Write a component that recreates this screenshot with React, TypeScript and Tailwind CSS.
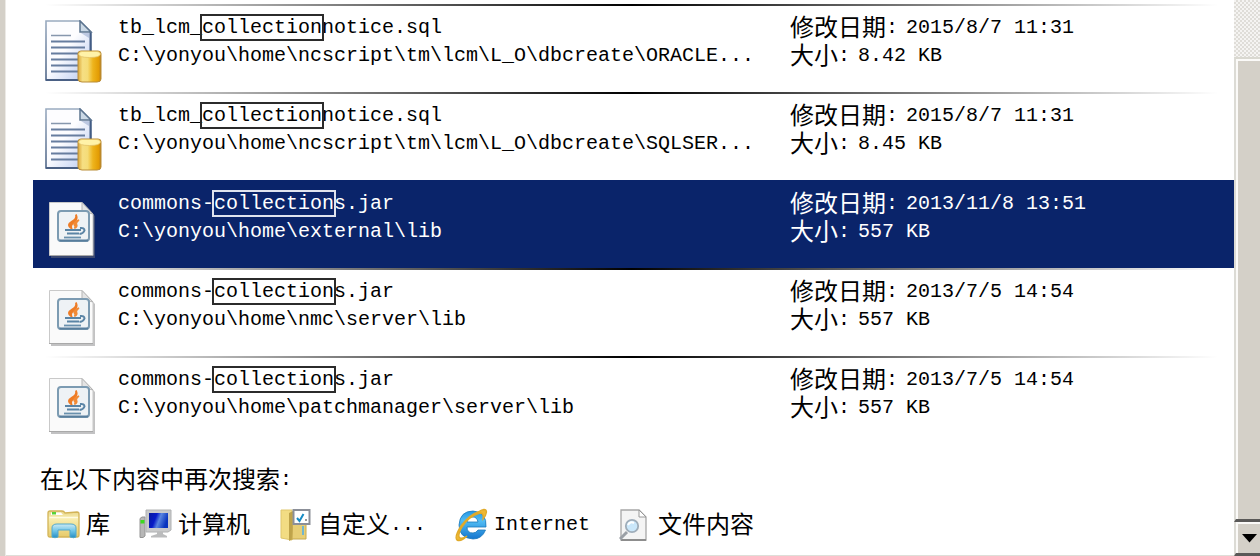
import type { ReactNode } from "react";

type FileKind = "sql" | "jar";

interface Result {
  kind: FileKind;
  before: string;
  match: string;
  after: string;
  path: string;
  date: string;
  size: string;
  selected?: boolean;
}

const results: Result[] = [
  { kind: "sql", before: "tb_lcm_", match: "collection", after: "notice.sql", path: "C:\\yonyou\\home\\ncscript\\tm\\lcm\\L_O\\dbcreate\\ORACLE...", date: "2015/8/7 11:31", size: "8.42 KB" },
  { kind: "sql", before: "tb_lcm_", match: "collection", after: "notice.sql", path: "C:\\yonyou\\home\\ncscript\\tm\\lcm\\L_O\\dbcreate\\SQLSER...", date: "2015/8/7 11:31", size: "8.45 KB" },
  { kind: "jar", before: "commons-", match: "collection", after: "s.jar", path: "C:\\yonyou\\home\\external\\lib", date: "2013/11/8 13:51", size: "557 KB", selected: true },
  { kind: "jar", before: "commons-", match: "collection", after: "s.jar", path: "C:\\yonyou\\home\\nmc\\server\\lib", date: "2013/7/5 14:54", size: "557 KB" },
  { kind: "jar", before: "commons-", match: "collection", after: "s.jar", path: "C:\\yonyou\\home\\patchmanager\\server\\lib", date: "2013/7/5 14:54", size: "557 KB" },
];

function SqlIcon() {
  return (
    <svg width="58" height="64" viewBox="0 0 58 64" aria-hidden="true">
      <defs>
        <linearGradient id="sheet" x1="0" y1="0" x2="1" y2="1">
          <stop offset="0.45" stopColor="#fdfdff" />
          <stop offset="1" stopColor="#b4c6ee" />
        </linearGradient>
        <linearGradient id="edge" x1="0" y1="0" x2="0" y2="1">
          <stop offset="0" stopColor="#9aabc0" />
          <stop offset="1" stopColor="#4d6486" />
        </linearGradient>
        <linearGradient id="gold" x1="0" y1="0" x2="1" y2="0">
          <stop offset="0" stopColor="#dca83a" />
          <stop offset="0.2" stopColor="#f6df83" />
          <stop offset="0.42" stopColor="#f5dc78" />
          <stop offset="0.65" stopColor="#eeb41c" />
          <stop offset="0.9" stopColor="#e39c04" />
          <stop offset="1" stopColor="#b97e1c" />
        </linearGradient>
      </defs>
      <path d="M1 1H35L46 12V60H1Z" fill="url(#sheet)" stroke="url(#edge)" strokeWidth="1.6" />
      <path d="M45.5 12V60" stroke="#425c85" strokeWidth="2" />
      <path d="M1 60H46" stroke="#4a6084" strokeWidth="2" />
      <path d="M35 1V12H46Z" fill="#cbd9e6" stroke="#5d7590" strokeWidth="1.5" />
      <path d="M36 13H44V18Z" fill="#8ba0c8" opacity="0.5" />
      <path d="M6 15.500H26" stroke="#8797ad" strokeWidth="1.5" />
      <path d="M6 21.500H40M6 27.500H40M6 33.500H36M6 39.500H33M6 45.500H33M6 51.500H33" stroke="#677d9f" strokeWidth="1.8" />
      <path d="M33 33.500Q33 31 36 31H53Q56 31 56 33.500V59Q56 62 52 62H37Q33 62 33 59Z" fill="url(#gold)" stroke="#b98d38" strokeWidth="1" />
      <path d="M33.500 34Q34 31.500 37 31.500H52Q55 31.500 55.500 34Q55 37.500 44.500 37.500T33.500 34Z" fill="#fff2a8" stroke="#e2c268" strokeWidth="0.8" />
    </svg>
  );
}

function JarIcon() {
  return (
    <svg width="58" height="60" viewBox="0 0 58 60" aria-hidden="true">
      <path d="M6 4H38L50 16V58H6Z" fill="#77777a" opacity="0.45" />
      <path d="M4.500 2.500H37L48 14V55.500H4.500Z" fill="#fafafa" stroke="#c9c9c9" strokeWidth="1" />
      <path d="M4 55.500H48" stroke="#a9a9a9" strokeWidth="1.200" />
      <path d="M37 2.500V13Q42 11.500 48 14Z" fill="#e4e4e4" stroke="#b5b5b5" strokeWidth="1" />
      <rect x="13" y="11" width="31" height="30" rx="3" fill="#eef2f5" stroke="#7c9bb2" strokeWidth="2" />
      <path d="M14.500 40.500H43" stroke="#577d9c" strokeWidth="2" />
      <path d="M31 14.500Q32 19 27 21.500Q21 25 26.500 28.500Q25 25 29 22.500Q33 19 31 14.500Z" fill="#ee7c26" stroke="#ee7c26" strokeWidth="1.800" />
      <path d="M34 20Q28.500 22 29 24.500Q31 26.500 29.500 28.500Q33 26.500 31.500 24Q31 22.500 34 20Z" fill="#f28a35" stroke="#f28a35" strokeWidth="1.400" />
      <path d="M20 30H36M22 33.500H34" stroke="#5a84a5" strokeWidth="2.200" />
      <path d="M35 28Q39.500 27.500 39.500 30.500Q38.500 33.500 34.500 34" fill="none" stroke="#5a84a5" strokeWidth="2" />
      <path d="M19 37.500H36" fill="none" stroke="#6990ad" strokeWidth="1.800" />
    </svg>
  );
}

function LibraryIcon() {
  return (
    <svg width="34" height="32" viewBox="0 0 34 32" aria-hidden="true">
      <defs>
        <linearGradient id="lib" x1="0" y1="0" x2="0" y2="1">
          <stop offset="0" stopColor="#e8d58a" />
          <stop offset="0.3" stopColor="#f8eeb0" />
          <stop offset="1" stopColor="#e7ca69" />
        </linearGradient>
        <linearGradient id="arch" x1="0" y1="0" x2="0" y2="1">
          <stop offset="0" stopColor="#cceaf3" />
          <stop offset="0.5" stopColor="#6fc5e7" />
          <stop offset="1" stopColor="#258dc3" />
        </linearGradient>
      </defs>
      <path d="M1 4Q1 2 3 2H15Q17 2 18 4L30 3Q32 3 32 5V26Q32 28 30 28H3Q1 28 1 26Z" fill="url(#lib)" stroke="#d3b458" strokeWidth="1.300" />
      <path d="M4 3.500H14L16 6H4Z" fill="#fff" />
      <rect x="5" y="3" width="4" height="2.500" fill="#58d236" />
      <path d="M2.500 8.500H31" stroke="#fffbe2" strokeWidth="1.500" />
      <path d="M5 28V19Q5 15 10 15H24Q29 15 29 19V28Q27 29.500 23 28V21H11V28Q8 29.500 5 28Z" fill="url(#arch)" stroke="#51a8cd" strokeWidth="1" />
    </svg>
  );
}

function ComputerIcon() {
  return (
    <svg width="34" height="32" viewBox="0 0 34 32" aria-hidden="true">
      <defs>
        <linearGradient id="screen" x1="0" y1="0" x2="1" y2="0.3">
          <stop offset="0" stopColor="#071a9c" />
          <stop offset="0.4" stopColor="#071bc8" />
          <stop offset="0.62" stopColor="#5a86e0" />
          <stop offset="1" stopColor="#0a35bf" />
        </linearGradient>
      </defs>
      <path d="M1 9.500L3 8H6V27L4 28.500H1Z" fill="#b7b7b7" stroke="#949494" strokeWidth="1" />
      <rect x="1.500" y="11" width="4" height="3.500" fill="#3bd91e" />
      <path d="M7 1H32V21L29 23H7Z" fill="#c9cacb" stroke="#b0b2b3" strokeWidth="1" />
      <rect x="10" y="4" width="19" height="15" fill="url(#screen)" />
      <path d="M18 23H24V25L28 27V28.500H12V27L18 25Z" fill="#bbbcbd" />
    </svg>
  );
}

function CustomIcon() {
  return (
    <svg width="34" height="34" viewBox="0 0 34 34" aria-hidden="true">
      <path d="M2 2H13V32L2 30Z" fill="#f2dc83" stroke="#dfc66c" strokeWidth="1" />
      <path d="M10 5L14 3V31L10 33Z" fill="#bea34a" />
      <path d="M14 5H27V31H13Z" fill="#e7ce75" stroke="#c6aa50" strokeWidth="1" />
      <path d="M23 18H25V27H23Z" fill="#71b5cf" />
      <rect x="14.500" y="2" width="16" height="14" fill="#fff" stroke="#8b8f98" strokeWidth="2" />
      <path d="M18 10L20.500 13L24.500 6" fill="none" stroke="#168bc4" strokeWidth="2" />
      <path d="M26 12H28" stroke="#777" strokeWidth="1.500" />
    </svg>
  );
}

function InternetIcon() {
  return (
    <svg width="34" height="34" viewBox="0 0 34 34" aria-hidden="true">
      <defs>
        <linearGradient id="globe" x1="0" y1="0" x2="0" y2="1">
          <stop offset="0" stopColor="#2597e5" />
          <stop offset="0.35" stopColor="#52bdf4" />
          <stop offset="1" stopColor="#1476cf" />
        </linearGradient>
      </defs>
      <path d="M31 19H12Q12 25 18 25Q21 25 23 22H30.500Q27 31 18 31Q4 30 4 17Q5 3 18 3Q32 4 31 19ZM12 14H23Q22 9 18 9Q13 9 12 14Z" fill="url(#globe)" stroke="#1c78ba" strokeWidth="0.800" fillRule="evenodd" />
      <path d="M23 4Q31 -1 31.500 4Q31 8 28 11Q29 5 25 5Q14 8 7 19Q2 28 5 30Q8 31 12 28Q6 34 2 32Q-1 29 6 18Q14 7 23 4Z" fill="#efb832" stroke="#e0aa2a" strokeWidth="1.400" />
    </svg>
  );
}

function ContentsIcon() {
  return (
    <svg width="34" height="34" viewBox="0 0 34 34" aria-hidden="true">
      <path d="M2 2H20L27 9V32H2Z" fill="#f4f4f4" stroke="#a7a7a7" strokeWidth="1.300" />
      <path d="M20 2V9H27Z" fill="#fff" stroke="#989898" strokeWidth="1" />
      <path d="M2 32H27" stroke="#8d8d8d" strokeWidth="2" />
      <path d="M8 24L1 31" stroke="#9ba0a6" strokeWidth="3" />
      <circle cx="13" cy="18" r="6.200" fill="#cae7fa" stroke="#9fadb9" strokeWidth="1.800" />
      <path d="M9 17Q11 13 15 15" stroke="#fff" strokeWidth="2" fill="none" />
    </svg>
  );
}

function Detail({ label, value }: { label: string; value: string }) {
  return (
    <div className="flex h-7 items-center gap-2">
      <dt className="flex items-center">
        <span className="pt-1 text-2xl leading-7">{label}</span>
        <span>:</span>
      </dt>
      <dd className="whitespace-pre">{value}</dd>
    </div>
  );
}

function ResultRow({ item }: { item: Result }) {
  return (
    <li className={item.selected ? "bg-[#0a246a] text-white" : "text-black"}>
      <div className={item.selected ? "h-[2px]" : "mr-4 ml-3 h-[2px] bg-linear-to-r from-transparent via-black to-transparent"} />
      <div className="flex h-[86px] pt-2 pl-3">
        <div className={item.kind === "sql" ? "w-[73px] shrink-0 pt-[6px]" : "w-[73px] shrink-0 pt-[10px]"}>
          {item.kind === "sql" ? <SqlIcon /> : <JarIcon />}
        </div>
        <div className="min-w-0 flex-1 whitespace-nowrap">
          <a href="#result" className="block h-7">
            {item.before}
            <mark className={item.selected ? "bg-transparent text-inherit outline-2 outline-[#dfe3ee]" : "bg-transparent text-inherit outline-2 outline-[#2b2b2b]"}>{item.match}</mark>
            {item.after}
          </a>
          <p className="h-7">{item.path}</p>
        </div>
        <dl className="w-[444px] shrink-0">
          <Detail label="修改日期" value={item.date} />
          <Detail label="大小" value={item.size} />
        </dl>
      </div>
    </li>
  );
}

function Place({ icon, children }: { icon: ReactNode; children: ReactNode }) {
  return (
    <a href="#search" className="flex items-center gap-[5px] whitespace-nowrap">
      {icon}
      {children}
    </a>
  );
}

export default function App() {
  return (
    <div className="flex min-h-screen overflow-hidden bg-white font-['Liberation_Mono','Noto_Sans_CJK_SC',monospace] text-xl leading-7 text-black">
      <div className="w-[6px] shrink-0 border-r border-[#eceae6] bg-[#d4d0c8]" />
      <main className="flex min-w-0 flex-1 flex-col border-b border-[#deded8] pt-1">
        <ul className="ml-[27px]">
          {results.map((item) => (
            <ResultRow key={item.path} item={item} />
          ))}
        </ul>
        <section className="pt-[22px] pl-[34px]">
          <h2 className="flex h-7 items-center">
            <span className="pt-1 text-2xl leading-7">在以下内容中再次搜索</span>
            <span>:</span>
          </h2>
          <nav className="mt-3 flex h-[38px] items-center gap-[29px] pl-[7px]">
            <Place icon={<LibraryIcon />}>
              <span className="pt-1 text-2xl leading-7">库</span>
            </Place>
            <Place icon={<ComputerIcon />}>
              <span className="pt-1 text-2xl leading-7">计算机</span>
            </Place>
            <Place icon={<CustomIcon />}>
              <span className="flex items-center">
                <span className="pt-1 text-2xl leading-7">自定义</span>
                <span>...</span>
              </span>
            </Place>
            <Place icon={<InternetIcon />}>
              <span>Internet</span>
            </Place>
            <Place icon={<ContentsIcon />}>
              <span className="pt-1 text-2xl leading-7">文件内容</span>
            </Place>
          </nav>
        </section>
      </main>
      <aside className="flex w-[26px] shrink-0 flex-col bg-[repeating-conic-gradient(#dfddd8_0_25%,#f5f4f2_0_50%)] bg-[length:4px_4px]">
        <div className="h-[57px]" />
        <div className="flex-1 border-t-2 border-b-3 border-l-2 border-t-[#d9d8d0] border-b-[#5a5958] border-l-[#dcdbd5] bg-[#d4d0c8] shadow-[inset_2px_2px_0_#fbfaf8]" />
        <button aria-label="向下滚动" className="flex h-[34px] items-center border-b-3 border-l-2 border-b-[#5a5958] border-l-[#dcdbd5] bg-[#d4d0c8] pt-[2px] pl-[6px] shadow-[inset_2px_2px_0_#fbfaf8]">
          <svg width="15" height="9" viewBox="0 0 15 9" aria-hidden="true">
            <path d="M0 0H15L7.500 8.500Z" fill="#000" />
          </svg>
        </button>
      </aside>
    </div>
  );
}
